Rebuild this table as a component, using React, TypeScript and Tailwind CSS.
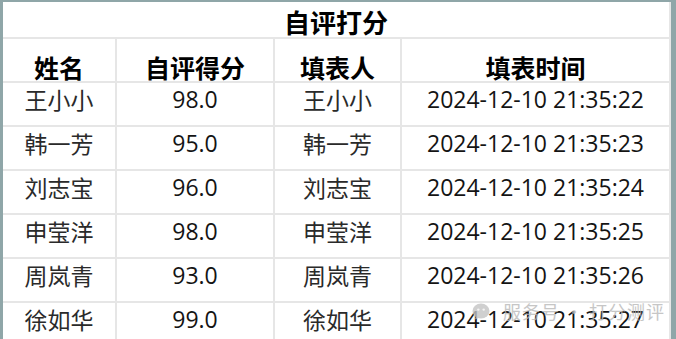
const ROWS = [
  { name: '王小小', score: '98.0', time: '2024-12-10 21:35:22' },
  { name: '韩一芳', score: '95.0', time: '2024-12-10 21:35:23' },
  { name: '刘志宝', score: '96.0', time: '2024-12-10 21:35:24' },
  { name: '申莹洋', score: '98.0', time: '2024-12-10 21:35:25' },
  { name: '周岚青', score: '93.0', time: '2024-12-10 21:35:26' },
  { name: '徐如华', score: '99.0', time: '2024-12-10 21:35:27' },
];

const cjk = "font-['Noto_Sans_CJK_SC',sans-serif]";
const num = "font-['Open_Sans','Noto_Sans_CJK_SC',sans-serif]";

function Watermark() {
  return (
    <div className="absolute left-[469px] top-[300px] flex items-center gap-[12px] opacity-80 pointer-events-none">
      <svg width="19" height="17" viewBox="0 0 19 17">
        <ellipse cx="9" cy="8" rx="8.5" ry="7.5" fill="#c4c4c4" />
        <path d="M4 13 L3 16.5 L7.5 14.5 Z" fill="#c4c4c4" />
        <circle cx="6.3" cy="6.6" r="1.2" fill="#f2f2f2" />
        <circle cx="11.7" cy="6.6" r="1.2" fill="#f2f2f2" />
      </svg>
      <span className={`${cjk} text-[18px] leading-none text-[#b9b9b9] tracking-[1px]`}>
        服务号 · 打分测评
      </span>
    </div>
  );
}

export default function App() {
  return (
    <div className="relative w-[676px] h-[339px] overflow-hidden bg-white border-l-[3px] border-t-2 border-r-[5px] border-[#8fa6a8]">
      <div className="h-full border-r-2 border-[#e6e6e6] text-[#141414]">
        {/* 标题 */}
        <div className={`${cjk} h-[35px] pt-[7px] text-center text-[26px] font-bold leading-none text-black`}>
          自评打分
        </div>

        {/* 表头 */}
        <div className={`${cjk} flex h-[44px] border-t-2 border-[#e6e6e6] text-[25px] font-bold leading-none text-black`}>
          <div className="w-[112px] pt-[16px] text-center">姓名</div>
          <div className="w-[158px] pt-[16px] text-center border-l-2 border-[#e6e6e6]">自评得分</div>
          <div className="w-[127px] pt-[16px] text-center border-l-2 border-[#e6e6e6]">填表人</div>
          <div className="w-[269px] pt-[16px] text-center border-l-2 border-[#e6e6e6]">填表时间</div>
        </div>

        {ROWS.map(r => (
          <div key={r.time} className="flex h-[44px] border-t-2 border-[#e6e6e6] leading-none">
            <div className={`${cjk} w-[112px] pt-[5px] text-center text-[23px] text-[#2a2a2a]`}>{r.name}</div>
            <div className={`${num} w-[158px] pt-[5px] text-center text-[23px] border-l-2 border-[#e6e6e6]`}>{r.score}</div>
            <div className={`${cjk} w-[127px] pt-[5px] text-center text-[23px] text-[#2a2a2a] border-l-2 border-[#e6e6e6]`}>{r.name}</div>
            <div className={`${num} w-[269px] pt-[5px] text-center text-[23px] border-l-2 border-[#e6e6e6]`}>{r.time}</div>
          </div>
        ))}
      </div>
      <Watermark />
    </div>
  );
}
